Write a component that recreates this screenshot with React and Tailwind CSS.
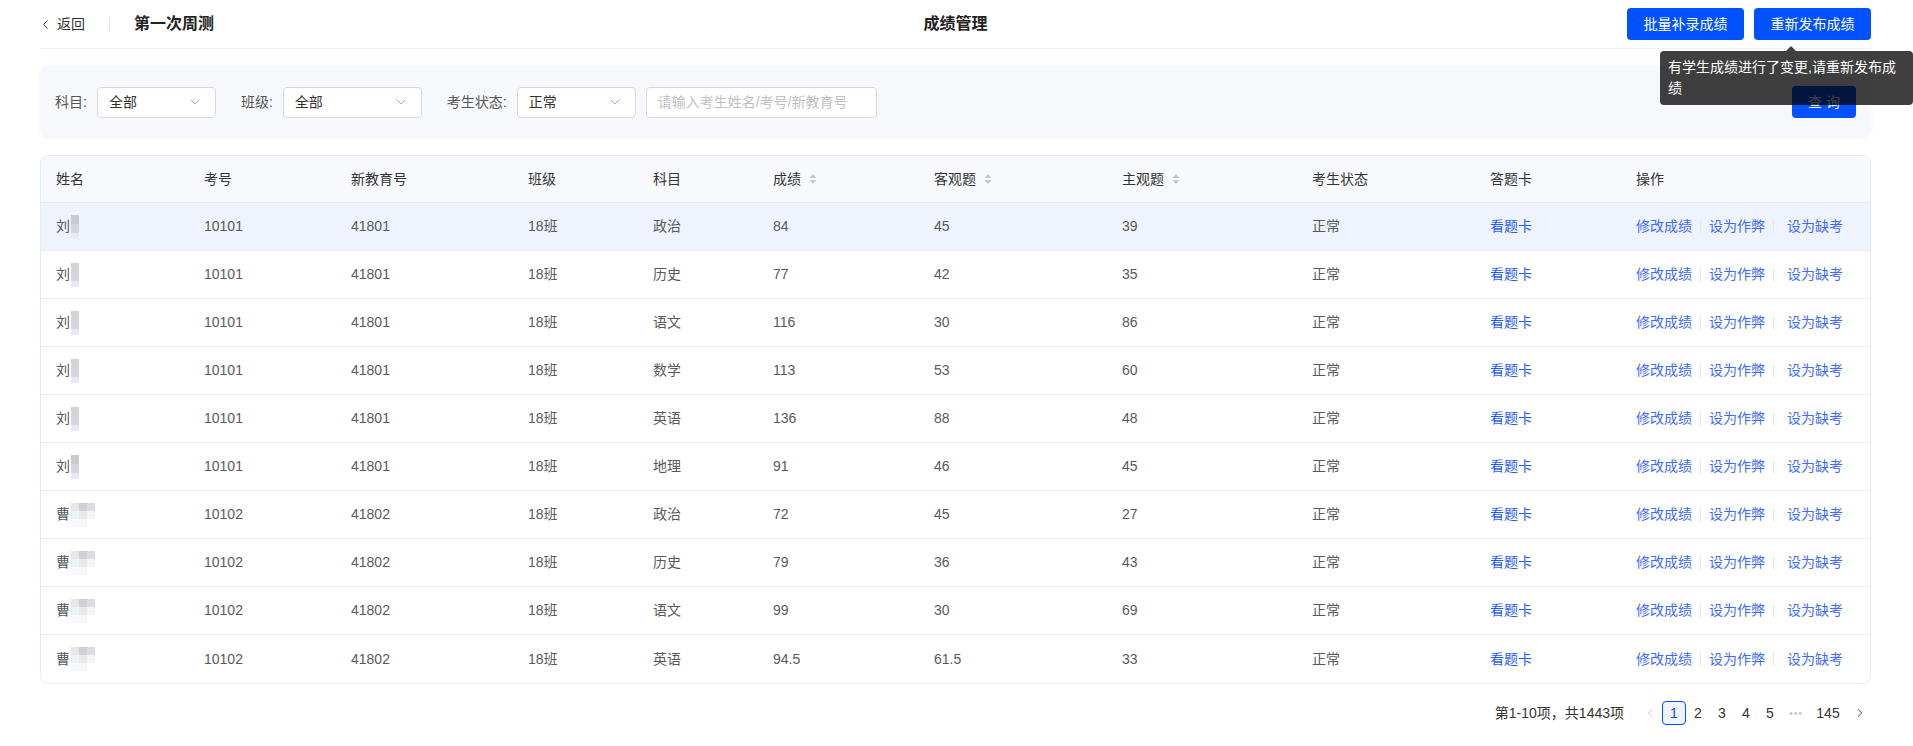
import React from "react";
import { ChevronLeft, ChevronRight, ChevronDown } from "lucide-react";

const rows = [
  { name: "刘", blur: "a", no: "10101", edu: "41801", cls: "18班", subj: "政治", score: "84", obj: "45", sub: "39" },
  { name: "刘", blur: "b", no: "10101", edu: "41801", cls: "18班", subj: "历史", score: "77", obj: "42", sub: "35" },
  { name: "刘", blur: "b", no: "10101", edu: "41801", cls: "18班", subj: "语文", score: "116", obj: "30", sub: "86" },
  { name: "刘", blur: "b", no: "10101", edu: "41801", cls: "18班", subj: "数学", score: "113", obj: "53", sub: "60" },
  { name: "刘", blur: "b", no: "10101", edu: "41801", cls: "18班", subj: "英语", score: "136", obj: "88", sub: "48" },
  { name: "刘", blur: "a", no: "10101", edu: "41801", cls: "18班", subj: "地理", score: "91", obj: "46", sub: "45" },
  { name: "曹", blur: "c", no: "10102", edu: "41802", cls: "18班", subj: "政治", score: "72", obj: "45", sub: "27" },
  { name: "曹", blur: "c", no: "10102", edu: "41802", cls: "18班", subj: "历史", score: "79", obj: "36", sub: "43" },
  { name: "曹", blur: "c", no: "10102", edu: "41802", cls: "18班", subj: "语文", score: "99", obj: "30", sub: "69" },
  { name: "曹", blur: "c", no: "10102", edu: "41802", cls: "18班", subj: "英语", score: "94.5", obj: "61.5", sub: "33" },
];

// column widths, table spans 40..1871
const cols = ["w-[148px]", "w-[147px]", "w-[177px]", "w-[125px]", "w-[120px]", "w-[161px]", "w-[188px]", "w-[190px]", "w-[178px]", "w-[146px]", "flex-1"];

const SortIcon = () => (
  <svg width="8" height="12" viewBox="0 0 8 12" className="ml-[8px]">
    <path d="M4 1 L7.5 5 L0.5 5 Z" fill="#c4c6cc" />
    <path d="M4 11 L7.5 7 L0.5 7 Z" fill="#c4c6cc" />
  </svg>
);

// pixelated blur over the hidden part of the names
const Blur = ({ kind }) => {
  if (kind === "c") {
    return (
      <span className="inline-flex flex-col ml-[1px] align-middle">
        <span className="flex">
          <span className="w-[8px] h-[8px] bg-[#e6e7ea]" />
          <span className="w-[8px] h-[8px] bg-[#cfd0d3]" />
          <span className="w-[8px] h-[8px] bg-[#dcdde0]" />
        </span>
        <span className="flex">
          <span className="w-[8px] h-[8px] bg-[#f0f1f3]" />
          <span className="w-[8px] h-[8px] bg-[#e9eaec]" />
          <span className="w-[8px] h-[8px] bg-[#f3f4f6]" />
        </span>
        <span className="flex">
          <span className="w-[8px] h-[8px] bg-[#f7f8fa]" />
          <span className="w-[8px] h-[8px] bg-[#f5f6f8]" />
        </span>
      </span>
    );
  }
  return (
    <span className="inline-flex flex-col ml-[1px] align-middle">
      <span className={`w-[8px] h-[9px] ${kind === "a" ? "bg-[#c9cacf]" : "bg-[#d4d5d9]"}`} />
      <span className="w-[8px] h-[9px] bg-[#d3d6de]" />
      <span className="w-[8px] h-[6px] bg-[#e8ebf2]" />
    </span>
  );
};

const Select = ({ label, value, width, last }) => (
  <div className={`flex items-center ${last ? "" : "mr-[25px]"}`}>
    <span className="text-[14px] text-[#555] mr-[10px]">{label}:</span>
    <div className={`${width} h-[31px] bg-white border border-[#d9d9d9] rounded-[4px] flex items-center justify-between pl-[11px] pr-[12px]`}>
      <span className="text-[14px] text-[#333]">{value}</span>
      <ChevronDown size={16} strokeWidth={1.2} color="#999" />
    </div>
  </div>
);

export default function App() {
  return (
    <div
      className="w-[1913px] h-[746px] bg-white relative overflow-hidden text-[14px] text-[#333]"
      style={{ fontFamily: '"Liberation Sans", "Noto Sans CJK SC", sans-serif' }}
    >
      {/* Header */}
      <div className="ml-[40px] mr-[42px] h-[49px] border-b border-[#eef0f6] grid grid-cols-[1fr_auto_1fr] items-center">
        <div className="flex items-center">
          <div className="flex items-center text-[14px] text-[#333]">
            <ChevronLeft size={15} strokeWidth={1.6} className="ml-[-2px] mr-[4px]" />
            <span>返回</span>
          </div>
          <div className="w-px h-[15px] bg-[#e3e8f5] ml-[24px] mr-[24px]" />
          <span className="text-[16px] font-bold text-[#222]">第一次周测</span>
        </div>
        <div className="text-[16px] font-bold text-[#222]">成绩管理</div>
        <div className="flex justify-end gap-[10px] self-start pt-[8px]">
          <button className="w-[117px] h-[32px] rounded-[4px] bg-[#0052ff] text-white text-[14px]">批量补录成绩</button>
          <button className="w-[117px] h-[32px] rounded-[4px] bg-[#0052ff] text-white text-[14px]">重新发布成绩</button>
        </div>
      </div>

      {/* Filter panel */}
      <div className="ml-[40px] mr-[42px] mt-[17px] h-[72px] bg-[#f7f8fc] rounded-[8px] shadow-[0_0_6px_rgba(0,0,0,0.04)] flex items-center pl-[15px] pr-[15px]">
        <Select label="科目" value="全部" width="w-[119px]" />
        <Select label="班级" value="全部" width="w-[139px]" />
        <Select label="考生状态" value="正常" width="w-[119px]" last />
        <div className="ml-[10px] w-[231px] h-[31px] bg-white border border-[#d9d9d9] rounded-[4px] flex items-center pl-[11px]">
          <span className="text-[14px] text-[#bfbfbf]">请输入考生姓名/考号/新教育号</span>
        </div>
        <div className="flex-1" />
        <button className="w-[64px] h-[32px] rounded-[4px] bg-[#0052ff] text-white text-[14px]">查 询</button>
      </div>

      {/* Table */}
      <div className="ml-[40px] mr-[42px] mt-[17px] border border-[#e2eafc] rounded-[8px] overflow-hidden">
        <div className="flex items-center h-[47px] bg-[#f8f9fd] border-b border-[#e2eafc] text-[#333]">
          {["姓名", "考号", "新教育号", "班级", "科目", "成绩", "客观题", "主观题", "考生状态", "答题卡", "操作"].map((h, i) => (
            <div key={h} className={`${cols[i]} pl-[15px] flex items-center`}>
              <span>{h}</span>
              {(i === 5 || i === 6 || i === 7) && <SortIcon />}
            </div>
          ))}
        </div>
        {rows.map((r, idx) => (
          <div
            key={idx}
            className={`flex items-center h-[48px] text-[#595959] ${idx < rows.length - 1 ? "border-b border-[#e6edfc]" : ""} ${idx === 0 ? "bg-[#eef3fe]" : "bg-white"}`}
          >
            <div className={`${cols[0]} pl-[15px] flex items-center`}>
              <span>{r.name}</span>
              <Blur kind={r.blur} />
            </div>
            <div className={`${cols[1]} pl-[15px]`}>{r.no}</div>
            <div className={`${cols[2]} pl-[15px]`}>{r.edu}</div>
            <div className={`${cols[3]} pl-[15px]`}>{r.cls}</div>
            <div className={`${cols[4]} pl-[15px]`}>{r.subj}</div>
            <div className={`${cols[5]} pl-[15px]`}>{r.score}</div>
            <div className={`${cols[6]} pl-[15px]`}>{r.obj}</div>
            <div className={`${cols[7]} pl-[15px]`}>{r.sub}</div>
            <div className={`${cols[8]} pl-[15px]`}>正常</div>
            <div className={`${cols[9]} pl-[15px] text-[#1d5cff]`}>看题卡</div>
            <div className={`${cols[10]} pl-[15px] flex items-center text-[#3d6bff]`}>
              <span>修改成绩</span>
              <span className="w-px h-[14px] bg-[#e3e8f5] mx-[8px]" />
              <span>设为作弊</span>
              <span className="w-px h-[14px] bg-[#e3e8f5] ml-[8px] mr-[13px]" />
              <span>设为缺考</span>
            </div>
          </div>
        ))}
      </div>

      {/* Pagination */}
      <div className="mr-[39px] mt-[17px] flex justify-end items-center h-[24px] text-[14px] text-[#333]">
        <span className="mr-[14px]">第1-10项，共1443项</span>
        <div className="w-[24px] h-[24px] flex items-center justify-center">
          <ChevronLeft size={14} strokeWidth={1.5} color="#c8c8c8" />
        </div>
        <div className="w-[24px] h-[24px] flex items-center justify-center border border-[#0052ff] bg-[#eef3fe] text-[#0052ff] rounded-[4px]">1</div>
        {["2", "3", "4", "5"].map((p) => (
          <div key={p} className="w-[24px] h-[24px] flex items-center justify-center">{p}</div>
        ))}
        <div className="w-[28px] h-[24px] flex items-center justify-center text-[#c4c4c4] tracking-[1px] text-[10px]">•••</div>
        <div className="min-w-[36px] px-[2px] h-[24px] flex items-center justify-center">145</div>
        <div className="w-[28px] h-[24px] flex items-center justify-center">
          <ChevronRight size={14} strokeWidth={1.5} color="#333" />
        </div>
      </div>

      {/* Tooltip */}
      <div className="absolute left-[1660px] top-[51px] w-[253px] bg-[rgba(0,0,0,0.75)] text-white text-[14px] leading-[21px] rounded-[4px] px-[8px] py-[6px]">
        <div className="absolute top-[-5px] left-[126px] w-0 h-0 border-l-[5px] border-r-[5px] border-b-[5px] border-l-transparent border-r-transparent border-b-[rgba(0,0,0,0.75)]" />
        有学生成绩进行了变更,请重新发布成
        <br />
        绩
      </div>
    </div>
  );
}
